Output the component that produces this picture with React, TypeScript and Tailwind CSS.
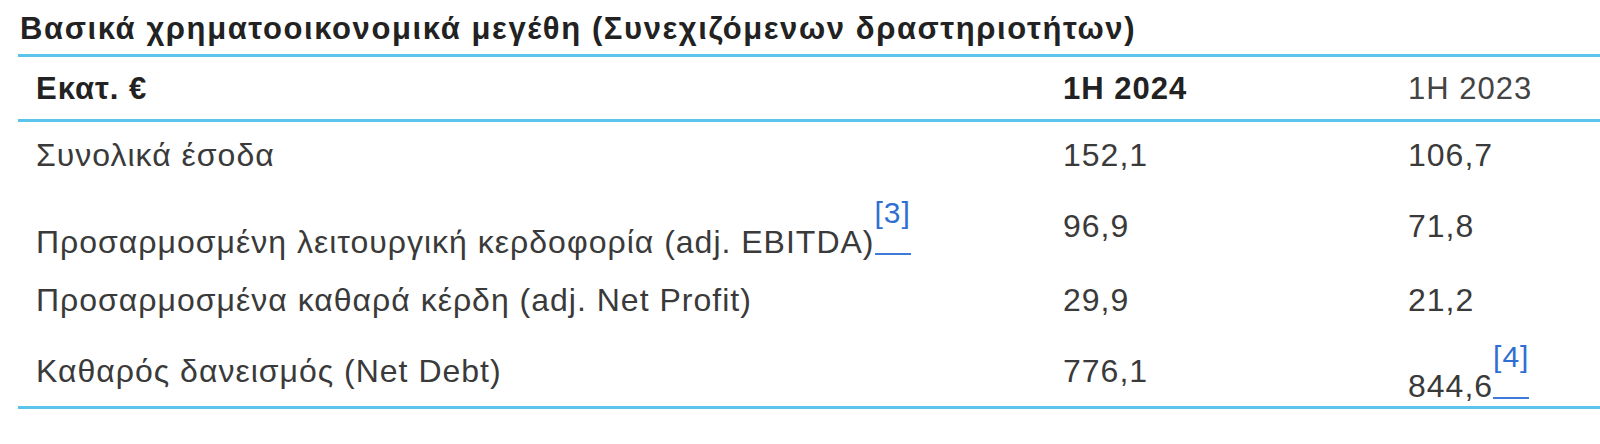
import React from 'react';

const LINE = 'border-[#5cc4ea]';

function Ref({ n }: { n: string }) {
  return (
    <a href="#" className="relative inline-block text-[#2f6fd3] no-underline">
      <span className="relative top-[-30px] text-[30px] leading-none tracking-[1px]">[{n}]</span>
      <span className="absolute left-0 right-0 bottom-[4px] h-[2px] bg-[#3f7ad8]" />
    </a>
  );
}

interface Row {
  label: React.ReactNode;
  cur: React.ReactNode;
  prev: React.ReactNode;
  h: string;
  labelPad: string;
  prevPad: string;
}

const rows: Row[] = [
  { label: 'Συνολικά έσοδα', cur: '152,1', prev: '106,7', h: 'h-[71px]', labelPad: 'pt-[16px]', prevPad: 'pt-[16px]' },
  {
    label: (
      <>
        Προσαρμοσμένη λειτουργική κερδοφορία (adj. EBITDA)
        <Ref n="3" />
      </>
    ),
    cur: '96,9',
    prev: '71,8',
    h: 'h-[74px]',
    labelPad: 'pt-[32px]',
    prevPad: 'pt-[16px]',
  },
  { label: 'Προσαρμοσμένα καθαρά κέρδη (adj. Net Profit)', cur: '29,9', prev: '21,2', h: 'h-[71px]', labelPad: 'pt-[16px]', prevPad: 'pt-[16px]' },
  {
    label: 'Καθαρός δανεισμός (Net Debt)',
    cur: '776,1',
    prev: (
      <>
        844,6
        <Ref n="4" />
      </>
    ),
    h: 'h-[68px]',
    labelPad: 'pt-[16px]',
    prevPad: 'pt-[31px]',
  },
];

export default function App() {
  return (
    <div
      className="w-[1600px] h-[444px] overflow-hidden bg-white pl-[18px] pt-[12px]"
      style={{ fontFamily: '"Liberation Sans", Arial, sans-serif' }}
    >
      <h2 className="pl-[2px] text-[31px] font-bold leading-[34px] tracking-[1.6px] text-[#222] whitespace-nowrap">
        Βασικά χρηματοοικονομικά μεγέθη (Συνεχιζόμενων δραστηριοτήτων)
      </h2>
      <div className={`mt-[8px] border-t-[3px] border-b-[3px] ${LINE}`}>
        <div className={`flex h-[65px] border-b-[3px] ${LINE} text-[31px] leading-[34px] tracking-[1px] text-[#222]`}>
          <div className="w-[1045px] pl-[18px] pt-[15px] font-bold">Εκατ. €</div>
          <div className="w-[345px] pt-[15px] font-bold">1H 2024</div>
          <div className="flex-1 pt-[15px] text-[#444]">1H 2023</div>
        </div>
        {rows.map((r, i) => (
          <div key={i} className={`flex ${r.h} text-[32px] leading-[34px] tracking-[1px] text-[#3a3a3a]`}>
            <div className={`w-[1045px] pl-[18px] ${r.labelPad} whitespace-nowrap`}>{r.label}</div>
            <div className="w-[345px] pt-[16px]">{r.cur}</div>
            <div className={`flex-1 ${r.prevPad} whitespace-nowrap`}>{r.prev}</div>
          </div>
        ))}
      </div>
    </div>
  );
}
